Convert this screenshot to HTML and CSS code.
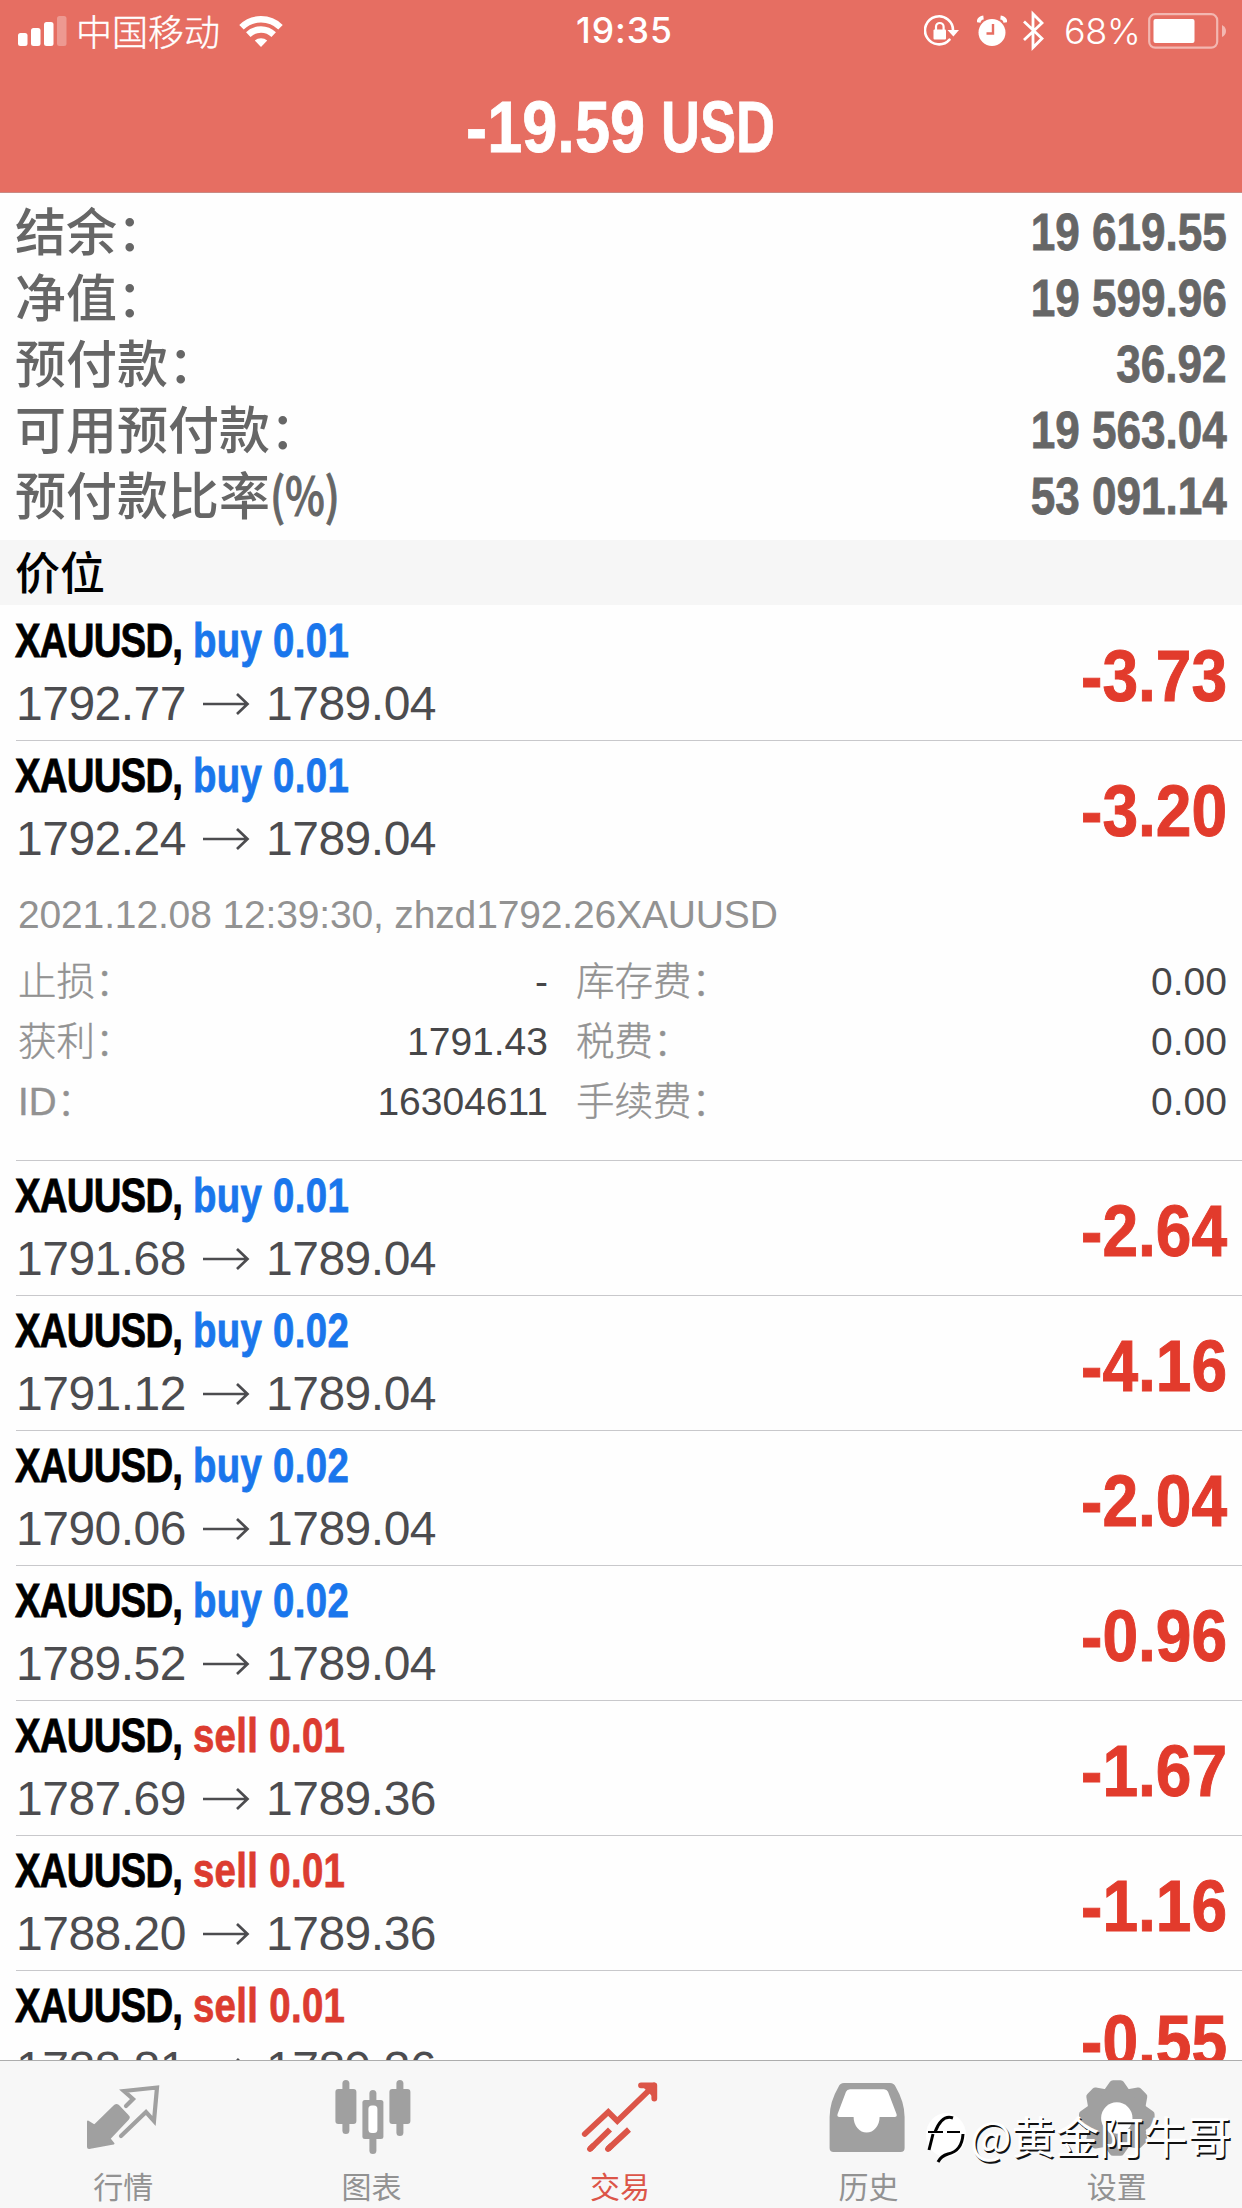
FILE: index.html
```html
<!DOCTYPE html>
<html lang="zh-CN">
<head>
<meta charset="utf-8">
<title>交易</title>
<link rel="stylesheet" href="styles.css">
</head>
<body>
<div class="app">
  <header class="header">
    <div class="status">
      <div class="status-left">
        <svg class="signal" width="50" height="32" viewBox="0 0 50 32" fill="#fff"><rect x="0" y="19" width="9.500" height="13" rx="2.500"/><rect x="13" y="14" width="9.500" height="18" rx="2.500"/><rect x="26" y="8" width="9.500" height="24" rx="2.500"/><rect x="39" y="2" width="9.500" height="30" rx="2.500" opacity=".3"/></svg>
        <span class="carrier">中国移动</span>
        <svg class="wifi" width="44" height="32" viewBox="0 0 44 32"><g fill="none" stroke="#fff" stroke-width="6.400"><path d="M2.500 12.200a28 28 0 0 1 39 0"/><path d="M9.300 19.600a18.200 18.200 0 0 1 25.400 0"/></g><path d="M15.800 25.600a9.300 9.300 0 0 1 12.400 0L22 32z" fill="#fff"/></svg>
      </div>
      <div class="clock">19:35</div>
      <div class="status-right">
        <svg width="36" height="34" viewBox="0 0 36 34"><path d="M25.500 25.600A14 14 0 1 1 29 17" fill="none" stroke="#fff" stroke-width="2.600" stroke-linecap="round"/><path d="M23.500 16h11.500l-5.600 6.500z" fill="#fff"/><rect x="9.500" y="15.500" width="12.500" height="10" rx="1" fill="#fff"/><path d="M12 16v-3.200a3.800 3.800 0 0 1 7.600 0V16" fill="none" stroke="#fff" stroke-width="2.200"/></svg>
        <svg class="alarm" width="30" height="32" viewBox="0 0 30 32"><circle cx="15" cy="17.500" r="13.500" fill="#fff"/><path d="M1.500 7.500Q2 3 6.500 2.500M28.500 7.500Q28 3 23.500 2.500" stroke="#fff" stroke-width="4" fill="none"/><path d="M16 9v9.500H9.500" fill="none" stroke="#e66e62" stroke-width="2.400"/></svg>
        <svg class="bt" width="22" height="42" viewBox="0 0 22 42"><path d="M2 11.500 20 28.500 11 37.500V4L20 13 2 30" fill="none" stroke="#fff" stroke-width="2.800"/></svg>
        <span class="percent">68%</span>
        <svg class="battery" width="80" height="38" viewBox="0 0 80 38"><rect x="1.200" y="2.200" width="68" height="33.500" rx="6" fill="none" stroke="#fff" stroke-width="2.200" opacity=".5"/><rect x="5.500" y="7" width="41" height="24" rx="2" fill="#fff"/><path d="M74 13q4 2 4 6t-4 6z" fill="#fff" opacity=".5"/></svg>
      </div>
    </div>
    <h1 class="total"><span class="amount">-19.59</span> <span class="currency">USD</span></h1>
  </header>

  <section class="summary">
    <div class="sum-row"><span class="label">结余：</span><span class="sum-value">19 619.55</span></div>
    <div class="sum-row"><span class="label">净值：</span><span class="sum-value">19 599.96</span></div>
    <div class="sum-row"><span class="label">预付款：</span><span class="sum-value">36.92</span></div>
    <div class="sum-row"><span class="label">可用预付款：</span><span class="sum-value">19 563.04</span></div>
    <div class="sum-row"><span class="label">预付款比率<span class="unit">(%)</span></span><span class="sum-value">53 091.14</span></div>
  </section>

  <h2 class="section-title">价位</h2>

  <main class="orders">
    <svg class="defs" width="0" height="0"><symbol id="arrow" viewBox="0 0 48 24"><path d="M1 12h44M35 2l10.500 10L35 22" fill="none" stroke="#4c4c4f" stroke-width="2.700"/></symbol></svg>
    <article class="order">
      <div><div class="name"><span class="symbol">XAUUSD,</span> <span class="buy">buy 0.01</span></div>
      <div class="prices">1792.77 <svg class="arrow"><use href="#arrow"/></svg> 1789.04</div></div>
      <div class="profit">-3.73</div>
    </article>
    <article class="order open">
      <div><div class="name"><span class="symbol">XAUUSD,</span> <span class="buy">buy 0.01</span></div>
      <div class="prices">1792.24 <svg class="arrow"><use href="#arrow"/></svg> 1789.04</div></div>
      <div class="profit">-3.20</div>
    </article>
    <div class="detail">
      <div class="comment">2021.12.08 12:39:30, zhzd1792.26XAUUSD</div>
      <dl class="facts">
        <div class="fact"><dt>止损：</dt><dd>-</dd></div>
        <div class="fact"><dt>库存费：</dt><dd>0.00</dd></div>
        <div class="fact"><dt>获利：</dt><dd>1791.43</dd></div>
        <div class="fact"><dt>税费：</dt><dd>0.00</dd></div>
        <div class="fact"><dt><span class="latin">ID</span>：</dt><dd>16304611</dd></div>
        <div class="fact"><dt>手续费：</dt><dd>0.00</dd></div>
      </dl>
    </div>
    <article class="order">
      <div><div class="name"><span class="symbol">XAUUSD,</span> <span class="buy">buy 0.01</span></div>
      <div class="prices">1791.68 <svg class="arrow"><use href="#arrow"/></svg> 1789.04</div></div>
      <div class="profit">-2.64</div>
    </article>
    <article class="order">
      <div><div class="name"><span class="symbol">XAUUSD,</span> <span class="buy">buy 0.02</span></div>
      <div class="prices">1791.12 <svg class="arrow"><use href="#arrow"/></svg> 1789.04</div></div>
      <div class="profit">-4.16</div>
    </article>
    <article class="order">
      <div><div class="name"><span class="symbol">XAUUSD,</span> <span class="buy">buy 0.02</span></div>
      <div class="prices">1790.06 <svg class="arrow"><use href="#arrow"/></svg> 1789.04</div></div>
      <div class="profit">-2.04</div>
    </article>
    <article class="order">
      <div><div class="name"><span class="symbol">XAUUSD,</span> <span class="buy">buy 0.02</span></div>
      <div class="prices">1789.52 <svg class="arrow"><use href="#arrow"/></svg> 1789.04</div></div>
      <div class="profit">-0.96</div>
    </article>
    <article class="order">
      <div><div class="name"><span class="symbol">XAUUSD,</span> <span class="sell">sell 0.01</span></div>
      <div class="prices">1787.69 <svg class="arrow"><use href="#arrow"/></svg> 1789.36</div></div>
      <div class="profit">-1.67</div>
    </article>
    <article class="order">
      <div><div class="name"><span class="symbol">XAUUSD,</span> <span class="sell">sell 0.01</span></div>
      <div class="prices">1788.20 <svg class="arrow"><use href="#arrow"/></svg> 1789.36</div></div>
      <div class="profit">-1.16</div>
    </article>
    <article class="order">
      <div><div class="name"><span class="symbol">XAUUSD,</span> <span class="sell">sell 0.01</span></div>
      <div class="prices">1788.81 <svg class="arrow"><use href="#arrow"/></svg> 1789.36</div></div>
      <div class="profit">-0.55</div>
    </article>
  </main>

  <nav class="tabs">
    <div class="tab">
      <svg width="80" height="80" viewBox="0 0 80 80"><path d="M42 28l7-7-9-8 33-3.500L70 43l-8-9-25 24" fill="none" stroke="#a0a0a0" stroke-width="4.200" stroke-linecap="round"/><path d="M4 43.500l6.500 4L31 27.500q1.500-1 3 0L44 38q1.500 1.500 0 3L25.500 60.500l4 5L5 70q-1 0-1-1z" fill="#a0a0a0" stroke="#a0a0a0" stroke-width="2" stroke-linejoin="round"/></svg>
      <span>行情</span>
    </div>
    <div class="tab">
      <svg width="80" height="80" viewBox="0 0 80 80" fill="#a0a0a0"><rect x="2.400" y="11" width="21" height="35" rx="3"/><rect x="9.400" y="2" width="7" height="54" rx="3.500"/><rect x="36.400" y="12" width="7" height="64" rx="3.500"/><rect x="29.400" y="22" width="21" height="39" rx="2.500"/><rect x="35.400" y="27.500" width="9" height="27.500" rx="3.500" fill="#fff"/><rect x="56.400" y="11" width="21" height="35" rx="3"/><rect x="63.400" y="2" width="7" height="56" rx="3.500"/></svg>
      <span>图表</span>
    </div>
    <div class="tab active">
      <svg width="80" height="80" viewBox="0 0 80 80" fill="none" stroke="#dc5548" stroke-width="5.800"><path d="M3.800 56 27.300 34 36.300 43 73 7.500" stroke-linecap="round"/><path d="M60 7.300H73.300V20.500" stroke-linecap="round" stroke-linejoin="round"/><path d="M65 8 72 15V8z"/><path d="M9 71 29 51.500M27 71 48 51.500"/><path d="M9 71l3-3M27 71l3-3" stroke-linecap="round"/></svg>
      <span>交易</span>
    </div>
    <div class="tab">
      <svg width="80" height="80" viewBox="0 0 80 80"><path d="M15 5H61q4 0 5.500 3.500Q75.600 24 75.600 39V70q0 4-4 4H4.600q-4 0-4-4V39Q.6 24 9.700 8.500 11 5 15 5z" fill="#a0a0a0"/><path d="M21 11.300H55q3 0 4 2.500L67.500 36q1 3-2 3H50.600a13 15.500 0 0 1-26 0H10.600q-3 0-2-3L17 13.800q1-2.500 4-2.500z" fill="#fff"/></svg>
      <span>历史</span>
    </div>
    <div class="tab">
      <svg width="80" height="80" viewBox="0 0 80 80"><defs><path id="tooth" d="M25.500 13 32 3.800Q33 2.200 35 2.200H42.600Q44.600 2.200 45.600 3.800L52 13z"/></defs><g fill="#a0a0a0"><circle cx="38.800" cy="40" r="31"/><use href="#tooth"/><use href="#tooth" transform="rotate(45 38.800 40)"/><use href="#tooth" transform="rotate(90 38.800 40)"/><use href="#tooth" transform="rotate(135 38.800 40)"/><use href="#tooth" transform="rotate(180 38.800 40)"/><use href="#tooth" transform="rotate(225 38.800 40)"/><use href="#tooth" transform="rotate(270 38.800 40)"/><use href="#tooth" transform="rotate(315 38.800 40)"/></g><circle cx="38.800" cy="40" r="15.700" fill="#fff"/></svg>
      <span>设置</span>
    </div>
  </nav>

  <div class="watermark">
    <svg width="46" height="52" viewBox="0 0 46 52"><ellipse cx="22" cy="24" rx="20" ry="22" fill="#fff"/><g fill="none" stroke="#000"><path d="M29 7Q18 3 11 21" stroke-width="3"/><path d="M4 21H19M23 21H36" stroke-width="2"/><path d="M9 23 5 39" stroke-width="3"/><path d="M39 23Q38 40 24 43 17 45 14 51" stroke-width="3"/></g></svg>
    <span>@黄金阿牛哥</span>
  </div>
</div>
</body>
</html>
```
FILE: styles.css
```css
* { box-sizing: border-box; margin: 0; padding: 0; }

body {
  width: 1242px;
  height: 2208px;
  overflow: hidden;
  background: #fefefe;
  font-family: "Liberation Sans", "Noto Sans CJK SC", sans-serif;
}

.app {
  position: relative;
  display: flex;
  flex-direction: column;
  height: 2208px;
}

svg { display: block; flex: none; }

/* header */
.header {
  height: 193px;
  flex: none;
  background: #e66e62;
  border-bottom: 1px solid #c98a84;
  color: #fff;
}
.status {
  display: grid;
  grid-template-columns: 1fr auto 1fr;
  align-items: center;
  height: 60px;
  padding: 0 14px 0 18px;
}
.status-left, .status-right { display: flex; align-items: center; }
.status-right { justify-content: flex-end; }
.signal { margin-bottom: 2px; }
.carrier {
  margin-left: 8px;
  font: 300 36px/58px "Noto Sans CJK SC", sans-serif;
  height: 60px;
  -webkit-text-stroke: .4px #fff;
}
.wifi { margin-left: 19px; }
.clock { font: 500 35.500px/62px Inter, sans-serif; letter-spacing: 1px; padding-left: 3px; }
.alarm { margin-left: 17px; }
.bt { margin-left: 15px; }
.percent {
  width: 75px;
  margin-left: 20px;
  font: 300 36px/62px Inter, sans-serif;
  letter-spacing: -.3px;
}
.battery { margin-left: 9px; }

.total {
  display: flex;
  justify-content: center;
  gap: 16px;
  padding: 26px 0 0 12px;
  font-size: 72px;
  line-height: 82px;
  -webkit-text-stroke: .8px #fff;
}
.amount { transform: scaleX(.877); transform-origin: right; }
.currency { transform: scaleX(.75); transform-origin: left; }

/* account summary */
.summary {
  height: 347px;
  flex: none;
  padding: 1px 15px 0 15px;
  color: #666;
}
.sum-row {
  display: flex;
  justify-content: space-between;
  height: 66px;
  white-space: nowrap;
}
.label {
  font: 500 51px/66px "Noto Sans CJK SC", sans-serif;
  padding-top: 1px;
  height: 66px;
  line-height: 68px;
}
.unit { display: inline-block; transform: scaleX(.83); transform-origin: left; -webkit-text-stroke: 1px #666; }
.sum-value {
  font: bold 51px/77px "Liberation Sans", sans-serif;
  height: 66px;
  transform: scaleX(.865);
  transform-origin: right;
  -webkit-text-stroke: .8px #666;
}

.section-title {
  height: 65px;
  flex: none;
  padding-left: 15px;
  background: #f6f6f6;
  color: #000;
  font: 500 45px/62px "Noto Sans CJK SC", sans-serif;
}

/* orders */
.orders { height: 1455px; flex: none; overflow: hidden; padding-left: 16px; }
.defs { position: absolute; }
.order {
  display: flex;
  justify-content: space-between;
  height: 135px;
  padding: 4px 15px 0 0;
  border-bottom: 1px solid #c8c8cb;
  white-space: nowrap;
}
.order:first-of-type { height: 136px; padding-top: 5px; }
.order.open { border-bottom: 0; }
.name {
  height: 62px;
  margin-left: -1px;
  font: bold 48px/62px "Liberation Sans", sans-serif;
  transform: scaleX(.8);
  transform-origin: left;
}
.symbol { letter-spacing: -1px; color: #000; -webkit-text-stroke: .8px #000; }
.buy { color: #1a76ec; letter-spacing: .4px; -webkit-text-stroke: .8px #1a76ec; }
.sell { color: #dc3c30; letter-spacing: .4px; -webkit-text-stroke: .8px #dc3c30; }
.prices {
  display: flex;
  align-items: center;
  gap: 16px;
  height: 64px;
  color: #4c4c4f;
  font-size: 48px;
  line-height: 64px;
  letter-spacing: -.5px;
}
.arrow { width: 48px; height: 24px; }
.profit {
  color: #e23b2c;
  font: bold 72px/132px "Liberation Sans", sans-serif;
  height: 130px;
  transform: scaleX(.89);
  transform-origin: right;
  -webkit-text-stroke: 1px #e23b2c;
}

.detail {
  height: 285px;
  padding-right: 16px;
  border-bottom: 1px solid #c8c8cb;
  color: #929292;
  font-size: 39px;
}
.comment {
  height: 72px;
  padding: 7px 0 0 2px;
  line-height: 64px;
  letter-spacing: -.15px;
  white-space: nowrap;
}
.facts {
  display: grid;
  grid-template-columns: 532px 651px;
  column-gap: 28px;
  grid-auto-rows: 60px;
}
.fact {
  display: flex;
  justify-content: space-between;
  align-items: baseline;
}
.fact dt {
  font: 300 38.500px/60px "Noto Sans CJK SC", sans-serif;
  -webkit-text-stroke: .4px #929292;
}
.fact:nth-child(odd) { padding-left: 2px; }
.latin { font-family: "Liberation Sans", sans-serif; }
.fact dd { color: #464648; line-height: 50px; }

/* tab bar */
.tabs {
  display: grid;
  grid-template-columns: repeat(5, 1fr);
  height: 148px;
  flex: none;
  border-top: 1px solid #adadad;
  background: #f7f7f7;
}
.tab {
  display: flex;
  flex-direction: column;
  align-items: center;
  padding-top: 17px;
  color: #929292;
  font: 400 30px/44px "Noto Sans CJK SC", sans-serif;
}
.tab span { margin-top: 5px; padding-right: 2px; }
.tab.active { color: #dc5548; }

/* author mark over the tab bar */
.watermark {
  position: absolute;
  left: 924px;
  top: 2110px;
  display: flex;
  align-items: center;
  color: #fff;
  font: 400 44px/56px "Noto Sans CJK SC", sans-serif;
  text-shadow: 1.500px 1.500px 0 #111;
  white-space: nowrap;
}
.watermark span { margin-top: -3px; }
```
